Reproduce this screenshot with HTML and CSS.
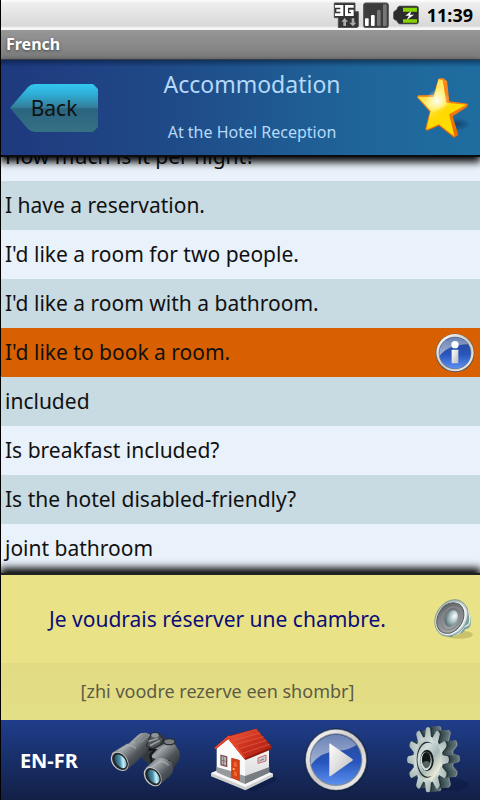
FILE: index.html
```html
<!DOCTYPE html>
<html lang="en">
<head>
  <meta charset="UTF-8">
  <meta name="viewport" content="width=device-width, initial-scale=1">
  <title>French</title>
  <link rel="stylesheet" href="styles.css">
</head>
<body>

<div class="status-bar">
  <svg class="status-3g" viewBox="0 0 78 78" aria-hidden="true">
    <path d="M4 3h62v26h10v44l-4 4H16V47H4z" fill="#333" stroke="#555" stroke-width="3"/>
    <path d="M6 9h25v33H6v-8h16v-5H10v-7h12v-5H6zM62 9H36v33h26V23H49v7h5v4h-9V17h17z" fill="#fff"/>
    <path d="M35 48l10 11h-6v13h-8V59h-6zM60 73L49 62h7V49h8v13h6z" fill="#aaa"/>
  </svg>
  <svg class="status-signal" viewBox="0 0 78 78" aria-hidden="true">
    <rect x="2" y="3" width="74" height="74" rx="6" fill="#3c3c3c" stroke="#555" stroke-width="3"/>
    <rect x="6" y="49" width="11" height="23" rx="3" fill="#fff"/>
    <rect x="24" y="39" width="11" height="33" rx="3" fill="#fff"/>
    <rect x="42" y="24" width="11" height="48" rx="3" fill="#777"/>
    <rect x="60" y="7" width="11" height="65" rx="3" fill="#777"/>
  </svg>
  <svg class="status-battery" viewBox="0 0 78 60" aria-hidden="true">
    <path d="M20 3h50q7 0 7 7v40q0 7-7 7H20q-5 0-9-10Q1 44 1 38V24q0-6 10-10Q14 3 20 3z" fill="#2c2c2c" stroke="#666" stroke-width="2"/>
    <path d="M30 8h42v12H30zM30 43h42v10H30z" fill="#86d400"/>
    <path d="M55 18L37 32h11l-7 13 22-16H51z" fill="#fff"/>
  </svg>
  <span class="clock">11:39</span>
</div>

<div class="title-bar">French</div>

<header class="header">
  <button class="back" type="button">
    <svg class="back-shape" viewBox="0 0 88 48" preserveAspectRatio="none" aria-hidden="true">
      <defs>
        <linearGradient id="backFill" x1="0" y1="0" x2="0" y2="1">
          <stop offset="0" stop-color="#32c8f0"/>
          <stop offset=".2" stop-color="#2eb0d8"/>
          <stop offset=".48" stop-color="#347f9d"/>
          <stop offset=".52" stop-color="#2a6580"/>
          <stop offset="1" stop-color="#357084"/>
        </linearGradient>
      </defs>
      <path d="M0 24L18 3Q21 0 25 0h58l5 5v38l-5 5H25q-4 0-7-3z" fill="url(#backFill)"/>
    </svg>
    <span class="back-label">Back</span>
  </button>
  <div class="headings">
    <h1>Accommodation</h1>
    <h2>At the Hotel Reception</h2>
  </div>
  <button class="star" type="button" aria-label="Favourite">
    <svg viewBox="50 45 168 192" aria-hidden="true">
      <defs>
        <linearGradient id="starFill" x1="0" y1="0" x2="1" y2="1">
          <stop offset="0" stop-color="#ffc400"/>
          <stop offset=".35" stop-color="#fff27a"/>
          <stop offset=".55" stop-color="#ffe000"/>
          <stop offset="1" stop-color="#fff000"/>
        </linearGradient>
        <linearGradient id="starSide" x1="0" y1="0" x2="0" y2="1">
          <stop offset="0" stop-color="#ff8a1c"/>
          <stop offset="1" stop-color="#e86a00"/>
        </linearGradient>
        <radialGradient id="starGlow">
          <stop offset="0" stop-color="#fff" stop-opacity=".9"/>
          <stop offset="1" stop-color="#fff" stop-opacity="0"/>
        </radialGradient>
        <radialGradient id="starShadow">
          <stop offset="0" stop-color="#0a2c50" stop-opacity=".6"/>
          <stop offset="1" stop-color="#0a2c50" stop-opacity="0"/>
        </radialGradient>
      </defs>
      <ellipse cx="176" cy="190" rx="42" ry="20" fill="url(#starShadow)"/>
      <path d="M120 53L133 51L146 60L153 121L209 128L207 137L163 166L180 222L167 230L122 194L86 209L81 204L94 152L56 109L59 103L106 102z" fill="url(#starSide)"/>
      <path d="M121 55L133 58L144 125L203 131L152 160L168 226L122 190L84 206L97 150L58 107L106 108z" fill="url(#starFill)"/>
      <circle cx="118" cy="120" r="36" fill="url(#starGlow)"/>
      <path d="M94 163Q134 126 203 131L152 160L168 226L122 190L84 206z" fill="#ffd000" opacity=".45"/>
    </svg>
  </button>
</header>

<main class="phrases">
  <ul>
    <li class="cut"><button type="button">How much is it per night?</button></li>
    <li><button type="button">I have a reservation.</button></li>
    <li><button type="button">I'd like a room for two people.</button></li>
    <li><button type="button">I'd like a room with a bathroom.</button></li>
    <li class="selected">
      <button type="button">I'd like to book a room.</button>
      <button class="info" type="button" aria-label="Info">
        <svg viewBox="0 0 120 120" aria-hidden="true">
          <defs>
            <linearGradient id="ring" x1="0" y1="0" x2="1" y2="1">
              <stop offset="0" stop-color="#fff"/>
              <stop offset=".5" stop-color="#c9c9cc"/>
              <stop offset="1" stop-color="#f4f4f4"/>
            </linearGradient>
            <linearGradient id="ball" x1="0" y1="0" x2="0" y2="1">
              <stop offset="0" stop-color="#26448f"/>
              <stop offset=".55" stop-color="#2856bd"/>
              <stop offset="1" stop-color="#5c90f0"/>
            </linearGradient>
            <linearGradient id="gloss" x1="0" y1="0" x2="0" y2="1">
              <stop offset="0" stop-color="#6b83b5"/>
              <stop offset="1" stop-color="#a6b5d5"/>
            </linearGradient>
            <linearGradient id="metal" x1="0" y1="0" x2="1" y2="1">
              <stop offset="0" stop-color="#fff"/>
              <stop offset="1" stop-color="#bdbdbd"/>
            </linearGradient>
          </defs>
          <circle cx="60" cy="60" r="58" fill="#555"/>
          <circle cx="60" cy="59" r="56" fill="url(#ring)"/>
          <circle cx="60" cy="60" r="49" fill="#777"/>
          <circle cx="60" cy="60" r="47" fill="url(#ball)"/>
          <path d="M13 62a47 47 0 0 1 86-28q-62 2-86 36z" fill="url(#gloss)"/>
          <circle cx="60" cy="35" r="11" fill="#fff"/>
          <rect x="50" y="50" width="20" height="41" rx="2" fill="url(#metal)"/>
        </svg>
      </button>
    </li>
    <li><button type="button">included</button></li>
    <li><button type="button">Is breakfast included?</button></li>
    <li><button type="button">Is the hotel disabled-friendly?</button></li>
    <li><button type="button">joint bathroom</button></li>
  </ul>
</main>

<section class="translation">
  <div class="foreign">
    <p lang="fr">Je voudrais réserver une chambre.</p>
    <button class="speaker" type="button" aria-label="Listen">
      <svg viewBox="104 112 120 126" aria-hidden="true">
        <defs>
          <linearGradient id="rim" x1="0" y1="0" x2="1" y2="1">
            <stop offset="0" stop-color="#8fa09f"/>
            <stop offset=".5" stop-color="#dfe8e8"/>
            <stop offset="1" stop-color="#8fb0b0"/>
          </linearGradient>
          <linearGradient id="membrane" x1="0" y1="0" x2="1" y2="1">
            <stop offset="0" stop-color="#55595c"/>
            <stop offset="1" stop-color="#b4b8ba"/>
          </linearGradient>
          <radialGradient id="dome" cx=".65" cy=".3" r=".75">
            <stop offset="0" stop-color="#fff"/>
            <stop offset=".5" stop-color="#a6c0c4"/>
            <stop offset="1" stop-color="#4b6468"/>
          </radialGradient>
        </defs>
        <ellipse cx="180" cy="222" rx="40" ry="12" fill="#a49c4a" opacity=".45"/>
        <path d="M196 132q22 26 18 60-3 12-16 13-7 15-20 13l-22 12-20-6z" fill="#799e9f"/>
        <path d="M203 146q14 24 5 46l-14 7-14 18-20 8" fill="none" stroke="#dcebea" stroke-width="4"/>
        <ellipse cx="156" cy="172" rx="46" ry="58" transform="rotate(32 156 172)" fill="url(#rim)" stroke="#708786" stroke-width="2"/>
        <ellipse cx="155" cy="173" rx="41" ry="53" transform="rotate(32 155 173)" fill="#f4f7f7"/>
        <ellipse cx="153" cy="172" rx="37" ry="49" transform="rotate(32 153 172)" fill="url(#membrane)" stroke="#54595c" stroke-width="3"/>
        <ellipse cx="155" cy="173" rx="27" ry="37" transform="rotate(32 155 173)" fill="none" stroke="#85898c" stroke-width="4"/>
        <ellipse cx="156" cy="173" rx="18" ry="26" transform="rotate(28 156 173)" fill="url(#dome)"/>
      </svg>
    </button>
  </div>
  <p class="pronounce">[zhi voodre rezerve een shombr]</p>
</section>

<nav class="toolbar">
  <button class="lang" type="button">EN-FR</button>
  <button type="button" aria-label="Search">
    <svg viewBox="15 45 240 210" aria-hidden="true">
      <defs>
        <linearGradient id="tube" x1="0" y1="0" x2="1" y2="1">
          <stop offset="0" stop-color="#555b60"/>
          <stop offset=".3" stop-color="#a2a7ab"/>
          <stop offset=".6" stop-color="#50565b"/>
          <stop offset="1" stop-color="#24282c"/>
        </linearGradient>
        <linearGradient id="lens" x1="0" y1="0" x2="1" y2="1">
          <stop offset="0" stop-color="#163848"/>
          <stop offset=".45" stop-color="#4b91ae"/>
          <stop offset=".65" stop-color="#c9f1fa"/>
          <stop offset="1" stop-color="#3c7f96"/>
        </linearGradient>
      </defs>
      <path d="M84 102l30-27q8-8 24-7l16 7 28-4 10 12 10 4q14-2 22 9l2 10q13 11 14 27-1 15-11 26l-22 46-70-50-20-20-26 6z" fill="#33383c"/>
      <path d="M84 102l30-27q8-8 24-7 12 4 14 16l-7 18 5 16-24 22-10 5z" fill="url(#tube)"/>
      <path d="M154 142q0-24 22-32l28-13q17-3 26 14 12 14 9 30-3 16-15 27l-12 10-30-24z" fill="url(#tube)"/>
      <path d="M106 93l24-20q9-3 18 2l-24 20q-12 3-18-2zM164 131q18-29 44-29" fill="none" stroke="#858a8e" stroke-width="4"/>
      <path d="M151 78q4-12 17-10 12 1 14 12l9 6-12 20-22 10-18-8z" fill="#50565b" stroke="#25292c" stroke-width="3"/>
      <ellipse cx="165" cy="76" rx="11" ry="7" fill="#8f959a"/>
      <ellipse cx="208" cy="95" rx="17" ry="9" fill="#787e83" stroke="#292d31" stroke-width="4"/>
      <path d="M145 94l29-9M150 107l29-15" stroke="#a4a9ac" stroke-width="4"/>
      <path d="M145 118l20 2-14 16 4 20 34 10 20-14" fill="none" stroke="#15191d" stroke-width="7"/>
      <path d="M35 129l46-28q24 0 36 15 7 15 1 32l-42 36z" fill="url(#tube)"/>
      <path d="M137 174l33-29q26-5 44 13 9 17 2 33l-41 38z" fill="url(#tube)"/>
      <path d="M54 122l32-16q15 0 22 10M152 172l29-18q17 0 25 13" fill="none" stroke="#b8bdc0" stroke-width="5" opacity=".5"/>
      <ellipse cx="59" cy="154" rx="23" ry="32" transform="rotate(-38 59 154)" fill="#c6c9cb"/>
      <ellipse cx="60" cy="154" rx="20" ry="29" transform="rotate(-38 60 154)" fill="#25292c"/>
      <ellipse cx="62" cy="154" rx="14" ry="23" transform="rotate(-36 62 154)" fill="url(#lens)"/>
      <ellipse cx="158" cy="200" rx="23" ry="32" transform="rotate(-38 158 200)" fill="#c6c9cb"/>
      <ellipse cx="159" cy="200" rx="20" ry="29" transform="rotate(-38 159 200)" fill="#25292c"/>
      <ellipse cx="161" cy="200" rx="14" ry="23" transform="rotate(-36 161 200)" fill="url(#lens)"/>
    </svg>
  </button>
  <button type="button" aria-label="Home">
    <svg viewBox="0 45 240 210" aria-hidden="true">
      <defs>
        <linearGradient id="roof" x1="0" y1="0" x2="1" y2="1">
          <stop offset="0" stop-color="#ee5c40"/>
          <stop offset=".5" stop-color="#c9301c"/>
          <stop offset="1" stop-color="#ad1e10"/>
        </linearGradient>
        <linearGradient id="wall" x1="0" y1="0" x2="0" y2="1">
          <stop offset="0" stop-color="#f5f5f5"/>
          <stop offset="1" stop-color="#d5d6d8"/>
        </linearGradient>
      </defs>
      <path d="M140 240l80-41 12 10-70 36z" fill="#07133a" opacity=".35"/>
      <path d="M33 190l20-8 150 4 16 5v9l-83 41L33 199z" fill="#cfcfcf"/>
      <path d="M33 189l16-7 155 3 15 6-83 40z" fill="#f7f7f7"/>
      <path d="M50 110l36-25 50 57v80l-86-36z" fill="#fafafa"/>
      <path d="M135 144l72-28v72l-72 34z" fill="url(#wall)"/>
      <path d="M50 171l45 13v22l-45-19zM118 193l17 5v24l-17-7z" fill="#969a9d"/>
      <path d="M135 198l73-27v17l-73 34z" fill="#777c80"/>
      <path d="M43 114l42-37 84-21 46 54v8l-79 32-51-63-38 31z" fill="#8c1a0f"/>
      <path d="M89 79l80-23 46 54-79 34z" fill="url(#roof)"/>
      <path d="M43 113l42-36 8 2 43 65-3 3-49-61-37 32z" fill="#e94529"/>
      <path d="M100 91l80-22M109 103l81-23M119 116l80-25M128 130l80-27" stroke="#e4614a" stroke-width="2"/>
      <path d="M63 136l17 4v29l-17-5z" fill="#aebac3" stroke="#80514e" stroke-width="4"/>
      <path d="M71 138v28M63 150l17 5" stroke="#80514e" stroke-width="2"/>
      <path d="M95 145l23 6v61l-23-9z" fill="#e0441a" stroke="#95260e" stroke-width="2"/>
      <path d="M100 153l12 3v18l-12-4zM100 181l12 4v17l-12-5z" fill="#ef692e" stroke="#bc3412" stroke-width="2"/>
      <circle cx="101" cy="177" r="3" fill="#ffd95c"/>
      <path d="M174 144l24-9v18l-24 7z" fill="#c8ccd2" stroke="#d06b6b" stroke-width="3"/>
      <path d="M179 152l13-5" stroke="#7c8087" stroke-width="3"/>
    </svg>
  </button>
  <button type="button" aria-label="Play">
    <svg viewBox="18 45 240 210" aria-hidden="true">
      <circle cx="139" cy="151" r="96" fill="#101f3f" opacity=".6"/>
      <circle cx="138" cy="149" r="92" fill="#777"/>
      <circle cx="138" cy="149" r="90" fill="url(#ring)"/>
      <circle cx="138" cy="149" r="79" fill="#8b8b8b"/>
      <circle cx="138" cy="149" r="76" fill="url(#ball)"/>
      <path d="M62 152a76 76 0 0 1 137-47q-24 17-55 17-54 3-82 44z" fill="url(#gloss)"/>
      <path d="M118 101q0-2 3 0l67 47q1 2-1 4l-66 47q-3 1-3-1z" fill="url(#metal)"/>
    </svg>
  </button>
  <button type="button" aria-label="Settings">
    <svg viewBox="3 45 240 210" aria-hidden="true">
      <defs>
        <linearGradient id="gearFace" gradientUnits="userSpaceOnUse" x1="-70" y1="-80" x2="70" y2="80">
          <stop offset="0" stop-color="#8a9c9a"/>
          <stop offset=".35" stop-color="#d3dfdd"/>
          <stop offset=".55" stop-color="#a5b8b6"/>
          <stop offset=".75" stop-color="#e9e9d6"/>
          <stop offset="1" stop-color="#8fa9ac"/>
        </linearGradient>
        <g id="teeth">
          <path id="tooth" d="M-15-62l5-31q2-5 10-5t10 5l5 31z"/>
          <use href="#tooth" transform="rotate(90)"/>
          <use href="#tooth" transform="rotate(180)"/>
          <use href="#tooth" transform="rotate(270)"/>
        </g>
        <g id="gear">
          <circle r="70"/>
          <use href="#teeth"/>
          <use href="#teeth" transform="rotate(30)"/>
          <use href="#teeth" transform="rotate(60)"/>
        </g>
      </defs>
      <ellipse cx="178" cy="224" rx="54" ry="19" fill="#09153c" opacity=".4"/>
      <g transform="translate(144 146) scale(.64 1)" fill="#7f8d8f"><use href="#gear"/></g>
      <g transform="translate(140 146) scale(.64 1)" fill="#5f7072"><use href="#gear"/></g>
      <g transform="translate(134 147) scale(.64 1)" fill="#52666a"><use href="#gear"/></g>
      <g transform="translate(128 147) scale(.64 1)" fill="#45595d"><use href="#gear"/></g>
      <g transform="translate(122 148) scale(.64 1)" fill="#384b4f"><use href="#gear"/></g>
      <g transform="translate(116 148) scale(.64 1)" fill="#26373a"><use href="#gear"/></g>
      <g transform="translate(111 149) scale(.64 1)" fill="url(#gearFace)"><use href="#gear"/></g>
      <ellipse cx="108" cy="149" rx="31" ry="54" fill="#1d2a2c"/>
      <g transform="translate(112 149) scale(.64 1)"><circle r="51" fill="url(#gearFace)"/></g>
      <ellipse cx="108" cy="151" rx="20" ry="32" fill="#181d1e"/>
      <ellipse cx="105" cy="153" rx="17" ry="28" fill="#d4dcda"/>
      <ellipse cx="106" cy="149" rx="13" ry="23" fill="#111618"/>
      <path d="M95 158q12-10 23 1-3 15-12 16-8-1-11-17z" fill="#526362"/>
    </svg>
  </button>
</nav>

</body>
</html>
```
FILE: styles.css
```css
* {
  box-sizing: border-box;
}
body {
  margin: 0;
  min-height: 100vh;
  display: flex;
  flex-direction: column;
  border-left: 1px solid #000;
  font-family: "Noto Sans", "Open Sans", sans-serif;
  color: #111;
}
button {
  padding: 0;
  border: 0;
  background: none;
  font: inherit;
  color: inherit;
  cursor: pointer;
}
svg {
  display: block;
}
h1, h2, p, ul {
  margin: 0;
  padding: 0;
  font-weight: normal;
}

/* system bars */
.status-bar {
  height: 30px;
  display: flex;
  align-items: center;
  justify-content: flex-end;
  gap: 4px;
  padding-right: 7px;
  background: linear-gradient(#fff 0, #eee 3px, #d8d8d8 26px, #f6f6f6 28px);
}
.status-3g, .status-signal {
  width: 26px;
  height: 26px;
}
.status-battery {
  width: 26px;
  height: 20px;
}
.clock {
  margin-left: 4px;
  font-size: 18px;
  font-weight: bold;
  color: #000;
}
.title-bar {
  height: 30px;
  padding-left: 5px;
  line-height: 28px;
  font-size: 16px;
  font-weight: bold;
  color: #fff;
  text-shadow: 0 1px 3px #444;
  background: linear-gradient(#979797, #7c7c7c);
  border-bottom: 1px solid #444b55;
}

/* header */
.header {
  position: relative;
  z-index: 1;
  height: 97px;
  display: grid;
  grid-template-columns: 97px 1fr 74px;
  align-items: center;
  border-bottom: 2px solid #0b0b10;
  background:
    linear-gradient(rgba(0, 20, 50, 0.5), transparent 7px),
    linear-gradient(90deg, #1f397e, #1f4a88 35%, #1f659a 75%, #1f6da0);
  box-shadow: 0 4px 8px 1px #000;
}
.back {
  display: grid;
  justify-self: end;
  width: 88px;
  height: 48px;
}
.back-shape, .back-label {
  grid-area: 1 / 1;
}
.back-shape {
  width: 100%;
  height: 100%;
}
.back-label {
  align-self: center;
  font-size: 21px;
}
.headings {
  text-align: center;
  color: #b5d9fa;
}
h1 {
  font-size: 23px;
  line-height: 48px;
}
h2 {
  font-size: 16px;
  line-height: 48px;
}
.star {
  justify-self: center;
}
.star svg {
  width: 56px;
  height: 64px;
}

/* phrase list */
.phrases {
  flex: 1;
  display: flex;
  overflow: hidden;
}
.phrases ul {
  flex: 1;
  display: flex;
  flex-direction: column;
  list-style: none;
}
.phrases li {
  flex: 1;
  display: flex;
  align-items: center;
  padding: 0 5px 0 4px;
  font-size: 21px;
  background: #e9f1fa;
}
.phrases li:nth-child(even) {
  background: #c8dae2;
}
.phrases li.cut {
  flex: none;
  height: 49px;
  margin-top: -25px;
}
.phrases li.selected {
  background: #d86000;
}
.phrases li button:first-child {
  flex: 1;
  text-align: left;
  line-height: 49px;
}
.info svg {
  width: 40px;
  height: 40px;
}

/* translation */
.translation {
  position: relative;
  z-index: 1;
  height: 147px;
  border-top: 2px solid #222;
  background: #e9e286;
  box-shadow: 0 -4px 8px 1px #000;
}
.foreign {
  height: 88px;
  display: grid;
  grid-template-columns: 1fr 46px;
  align-items: center;
  font-size: 21px;
  text-align: center;
  color: #0c0c78;
}
.speaker svg {
  width: 40px;
  height: 42px;
}
.pronounce {
  height: 57px;
  padding-right: 46px;
  line-height: 56px;
  font-size: 18px;
  text-align: center;
  color: #5c5b45;
  background: linear-gradient(#e2db83, #e3df86);
}

/* bottom toolbar */
.toolbar {
  position: relative;
  z-index: 2;
  height: 80px;
  display: grid;
  grid-template-columns: repeat(5, 1fr);
  align-items: center;
  justify-items: center;
  background: linear-gradient(#1f3d8b, #122046);
}
.toolbar svg {
  width: 80px;
  height: 70px;
}
.lang {
  font-size: 20px;
  font-weight: bold;
  color: #fff;
}
```
